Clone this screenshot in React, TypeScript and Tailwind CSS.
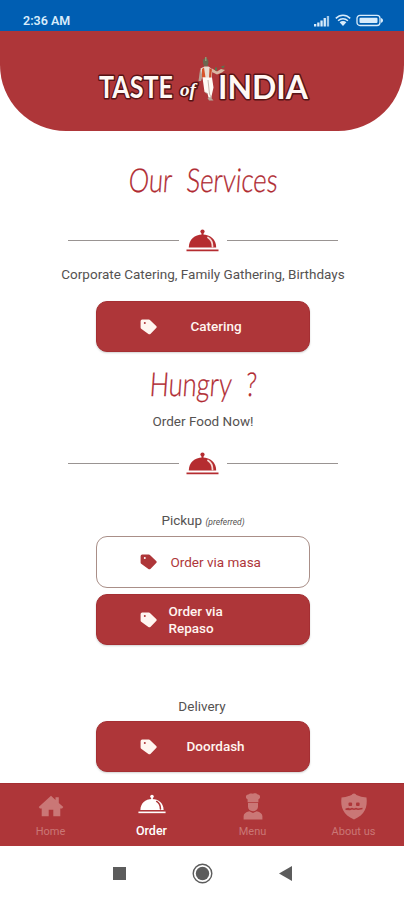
import clsx from 'clsx'

const StatusBar = () => {
  return (
    <div className="h-[31px] bg-[#005eb2] flex items-start justify-between pl-[23px] pr-[20px] text-[#d9ecfb]">
      <span className="mt-[13px] text-[12.500px] leading-[15px] font-semibold">
        2:36 AM
      </span>
      <div className="flex items-center mt-[14px] h-[13px]">
        <svg width="17" height="12" viewBox="0 0 17 12" fill="currentColor">
          <rect x="1" y="9" width="2.300" height="2.500" />
          <rect x="4.200" y="7.500" width="2.300" height="4" />
          <rect x="7.400" y="5.500" width="2.300" height="6" />
          <rect x="10.600" y="3" width="2.300" height="8.500" />
          <rect x="13.800" y="1" width="2.300" height="10.500" opacity="0.75" />
        </svg>
        <svg
          className="ml-[5px]"
          width="16"
          height="13"
          viewBox="0 0 16 13"
          fill="none"
          stroke="currentColor"
          strokeWidth="1.5"
        >
          <path d="M.8 4.4C5 .2 11 .2 15.2 4.4" />
          <path d="M3.1 6.800c2.800-2.700 7-2.700 9.800 0" />
          <path d="M4.600 8.300c1.900-1.700 4.900-1.700 6.800 0L8 12z" fill="currentColor" stroke="none" />
        </svg>
        <svg className="ml-[5px]" width="28" height="13" viewBox="0 0 28 13">
          <rect
            x="1"
            y="1.3"
            width="23"
            height="10.2"
            rx="3"
            fill="none"
            stroke="currentColor"
            strokeWidth="1.3"
          />
          <rect x="3.5" y="3.7" width="18" height="5.4" rx="1" fill="currentColor" />
          <path d="M25 4c1.5.6 2 1.500 2 2.400s-.5 1.800-2 2.400z" fill="currentColor" />
        </svg>
      </div>
    </div>
  )
}

const Logo = () => {
  return (
    <svg
      width="230"
      height="60"
      viewBox="0 0 230 60"
      fill="#fff8f4"
      stroke="#571315"
      strokeWidth="3"
      strokeLinejoin="round"
      style={{ paintOrder: 'stroke' }}
      fontFamily="Lato, sans-serif"
      fontWeight="700"
    >
      <text
        transform="translate(9 47.5) scale(.84 1)"
        fontSize="30"
        textLength="88"
        lengthAdjust="spacingAndGlyphs"
      >
        TASTE
      </text>
      <text
        x="90"
        y="45.500"
        fontSize="18"
        fontStyle="italic"
        fontFamily="'Liberation Serif', serif"
        fontWeight="700"
        textLength="16"
        lengthAdjust="spacingAndGlyphs"
      >
        of
      </text>
      <text x="128" y="49" fontSize="32" textLength="90" lengthAdjust="spacingAndGlyphs">
        INDIA
      </text>
      <g stroke="none">
        <path d="M108.500 31l1.500-11 3.500-2 1 3-3.500 10z" fill="#b9a194" />
        <path d="M113 9.500q2.500-2.500 5 0l.5 3-1 4h-3.500l-1-4z" fill="#6d6650" />
        <path d="M115 7h1.500v4H115z" fill="#8b9a75" />
        <path d="M110.500 18.500l4-2h4l4 3-1 9h-8.500z" fill="#e9ded3" />
        <path d="M112 19l2-1.500 1.500 10h-3.500z" fill="#d8552b" />
        <path d="M119.500 18l2.500 1.500-1 8.500h-2z" fill="#cf4a2a" />
        <path d="M122 18.500l5 3 4-2.500 4 1-3 2.500-5 2-5-2.500z" fill="#d9b8a3" />
        <path d="M125 17.500h2v3h-2zM131 16.500l4-1-2 3z" fill="#59744f" />
        <path d="M112.500 27.500h9.500l1.500 10-2.500 11-2.500-1-1-4-3-1.500z" fill="#fffaf5" />
        <path d="M118 30l1.500 14 2 4M115 42l3 2" fill="none" stroke="#baaaa0" strokeWidth=".8" />
        <path d="M117.500 48l3-1 3 3.500h-4.500z" fill="#b8a79b" />
      </g>
    </svg>
  )
}

const Cloche = ({ className, shine }: { className?: string; shine: string }) => {
  return (
    <svg className={className} viewBox="0 0 33 23" fill="currentColor">
      <circle cx="16.500" cy="2.600" r="2.100" />
      <path d="M15.500 4h2v2.500h-2z" />
      <path d="M2.800 18.600C3 10.500 8.500 5.600 16.500 5.600s13.500 4.900 13.700 13z" />
      <path
        d="M22 8.500c3.300 2 4.500 5 4.500 9"
        fill="none"
        stroke={shine}
        strokeWidth="1.800"
        strokeLinecap="round"
      />
      <path d="M.5 20.400h32v1.900H.5z" />
    </svg>
  )
}

const Tag = () => {
  return (
    <svg className="w-[17px] h-[16px] shrink-0" viewBox="0 0 17 16">
      <path
        fillRule="evenodd"
        fill="currentColor"
        d="M2.200.6h6.600q.8 0 1.400.6l6 5.700q1 1 0 2L10.400 14.900q-1 .9-2 0L1.200 9.800Q.6 9.200.6 8.400V2.200Q.6.6 2.200.6zM4.800 3a1 1 0 1 0 0 2 1 1 0 0 0 0-2z"
      />
    </svg>
  )
}

const Divider = () => {
  return (
    <div className="w-[270px] h-[23px] mx-auto flex items-center justify-between">
      <div className="w-[111px] h-px bg-[#999492]" />
      <Cloche className="w-[33px] h-[23px] text-[#b52c30]" shine="#f7d9d4" />
      <div className="w-[111px] h-px bg-[#999492]" />
    </div>
  )
}

// Thin narrow lettering, squeezed to the given width
const Script = ({ text, width }: { text: string; width: number }) => {
  return (
    <h2 className="h-[42px] flex justify-center">
      <svg
        className="overflow-visible"
        width={width}
        height="42"
        fill="#b02a31"
        stroke="#b02a31"
        strokeWidth=".3"
        fontFamily="Lato, sans-serif"
        fontWeight="300"
        fontSize="33"
        wordSpacing="10"
      >
        <text
          transform="translate(0 31) skewX(-4) scale(.8 1)"
          textLength={width / 0.8}
          lengthAdjust="spacingAndGlyphs"
        >
          {text}
        </text>
      </svg>
    </h2>
  )
}

const OrderButton = ({
  title,
  outline,
  labelClass,
}: {
  title: string
  outline?: boolean
  labelClass: string
}) => {
  return (
    <button
      className={clsx(
        'w-[214px] mx-auto rounded-[11px] flex items-center pl-[43px] text-[13.500px] leading-[17px] text-left',
        outline
          ? 'h-[52px] bg-white border border-[#a98f88] text-[#ae3639]'
          : 'h-[51px] bg-[#ae3639] border border-[#a52f33] text-[#fff5f0] shadow-[0_1px_2px_rgba(0,0,0,0.18)]'
      )}
    >
      <Tag />
      <span className={labelClass}>{title}</span>
    </button>
  )
}

const HomeIcon = () => {
  return (
    <svg width="26" height="22" viewBox="0 0 26 22" fill="currentColor">
      <path d="M13 .8l4.500 4.100V2.200h3.300v5.700l4.500 4-1.200 1.500h-1.800v7.800h-7v-6.400h-4.600v6.400h-7v-7.800H1.900L.7 11.900z" />
    </svg>
  )
}

const ChefIcon = () => {
  return (
    <svg width="20" height="27" viewBox="0 0 20 27" fill="currentColor">
      <path d="M4.600 6.200C2.300 5.500 2.300 2 5.200 1.600 6.600 0 8.500.3 10 .7c1.500-.5 3.400-.6 4.800.9 2.900.4 2.900 3.900.6 4.600v3.100H4.600z" />
      <path d="M5 10h10v3.500c0 2.800-2 4.700-5 4.700s-5-1.900-5-4.700z" />
      <path d="M.6 26.500v-3.200c0-2.600 2-4.300 5.700-5.100L10 20l3.700-1.800c3.700.8 5.700 2.500 5.700 5.100v3.200z" />
    </svg>
  )
}

const ShieldIcon = () => {
  return (
    <svg width="28" height="27" viewBox="0 0 28 27">
      <path
        d="M14 .5q1.800 0 2.400 1.500Q21 4 26.500 4.600c1.200 9.400-1.500 17.600-12.500 21.800C3 22.200.3 14 1.500 4.600 7 4 11.600 2 11.600 2Q12.200.5 14 .5z"
        fill="currentColor"
      />
      <g fill="#ae3639">
        <rect x="8.500" y="9.500" width="3.600" height="3.600" rx="1" />
        <rect x="16" y="9.500" width="3.600" height="3.600" rx="1" />
        <path d="M5.500 15.500l3-.8 1.500.8 2-.8 2 .8 2-.8 2 .8 4.500-.7v1.400l-4.500.8-2-.6-2 .7-2-.7-2 .8-4.500-.3z" />
      </g>
    </svg>
  )
}

const tabs = [
  { title: 'Home', icon: <HomeIcon /> },
  { title: 'Order', icon: <Cloche className="w-[28px] h-[20px]" shine="#ae3639" />, active: true },
  { title: 'Menu', icon: <ChefIcon /> },
  { title: 'About us', icon: <ShieldIcon /> },
]

const App = () => {
  return (
    <div className="w-[404px] h-[900px] flex flex-col bg-white overflow-hidden font-['Roboto',sans-serif] text-[#555251]">
      <StatusBar />
      <header className="h-[100px] bg-[#ae3639] rounded-b-[66px] flex justify-center pt-[19px] pl-[6px]">
        <Logo />
      </header>

      <main className="h-[652px] flex flex-col text-[13.500px] leading-[16px] text-center">
        <div className="mt-[30px]">
          <Script text="Our Services" width={149} />
        </div>
        <div className="mt-[26px] pl-px">
          <Divider />
        </div>
        <p className="mt-[14px] pl-[2px]">
          Corporate Catering, Family Gathering, Birthdays
        </p>
        <div className="mt-[19px] flex pl-px">
          <OrderButton title="Catering" labelClass="ml-[34px] font-medium" />
        </div>
        <div className="mt-[13px]">
          <Script text="Hungry ?" width={107} />
        </div>
        <p className="mt-[6px] pl-[2px]">Order Food Now!</p>
        <div className="mt-[23px] pl-px">
          <Divider />
        </div>
        <p className="mt-[37px] pl-[2px]">
          Pickup <span className="text-[8.500px] italic">(preferred)</span>
        </p>
        <div className="mt-[6px] flex flex-col gap-[6px] pl-px">
          <OrderButton title="Order via masa" outline labelClass="ml-[14px]" />
          <OrderButton title="Order via Repaso" labelClass="ml-[12px] w-[70px] font-medium" />
        </div>
        <p className="mt-[53px]">Delivery</p>
        <div className="mt-[7px] flex pl-px">
          <OrderButton title="Doordash" labelClass="ml-[30px] font-medium" />
        </div>
      </main>

      <nav className="h-[63px] bg-[#ae3639] border-t border-[#a52f33] grid grid-cols-4">
        {tabs.map((tab) => (
          <div
            key={tab.title}
            className={clsx(
              'flex flex-col items-center',
              tab.active ? 'text-white' : 'text-[#ca7776]'
            )}
          >
            <div className={clsx('h-[38px] flex items-center', tab.active ? 'pt-[2px]' : 'pt-[6px]')}>
              {tab.icon}
            </div>
            <span
              className={clsx(
                'leading-[14px]',
                tab.active ? 'mt-[2px] text-[12.500px] font-medium' : 'mt-[3px] text-[11px]'
              )}
            >
              {tab.title}
            </span>
          </div>
        ))}
      </nav>

      <div className="h-[54px] flex items-center justify-center gap-[66px] text-[#5c5c5c]">
        <div className="w-[13px] h-[13px] bg-[#5c5c5c]" />
        <svg width="21" height="21" viewBox="0 0 21 21">
          <circle cx="10.500" cy="10.500" r="9.300" fill="none" stroke="currentColor" strokeWidth="1.400" />
          <circle cx="10.500" cy="10.500" r="6.700" fill="currentColor" />
        </svg>
        <svg width="13" height="15" viewBox="0 0 13 15" fill="currentColor">
          <path d="M0 7.500L13 0v15z" />
        </svg>
      </div>
    </div>
  )
}

export default App
